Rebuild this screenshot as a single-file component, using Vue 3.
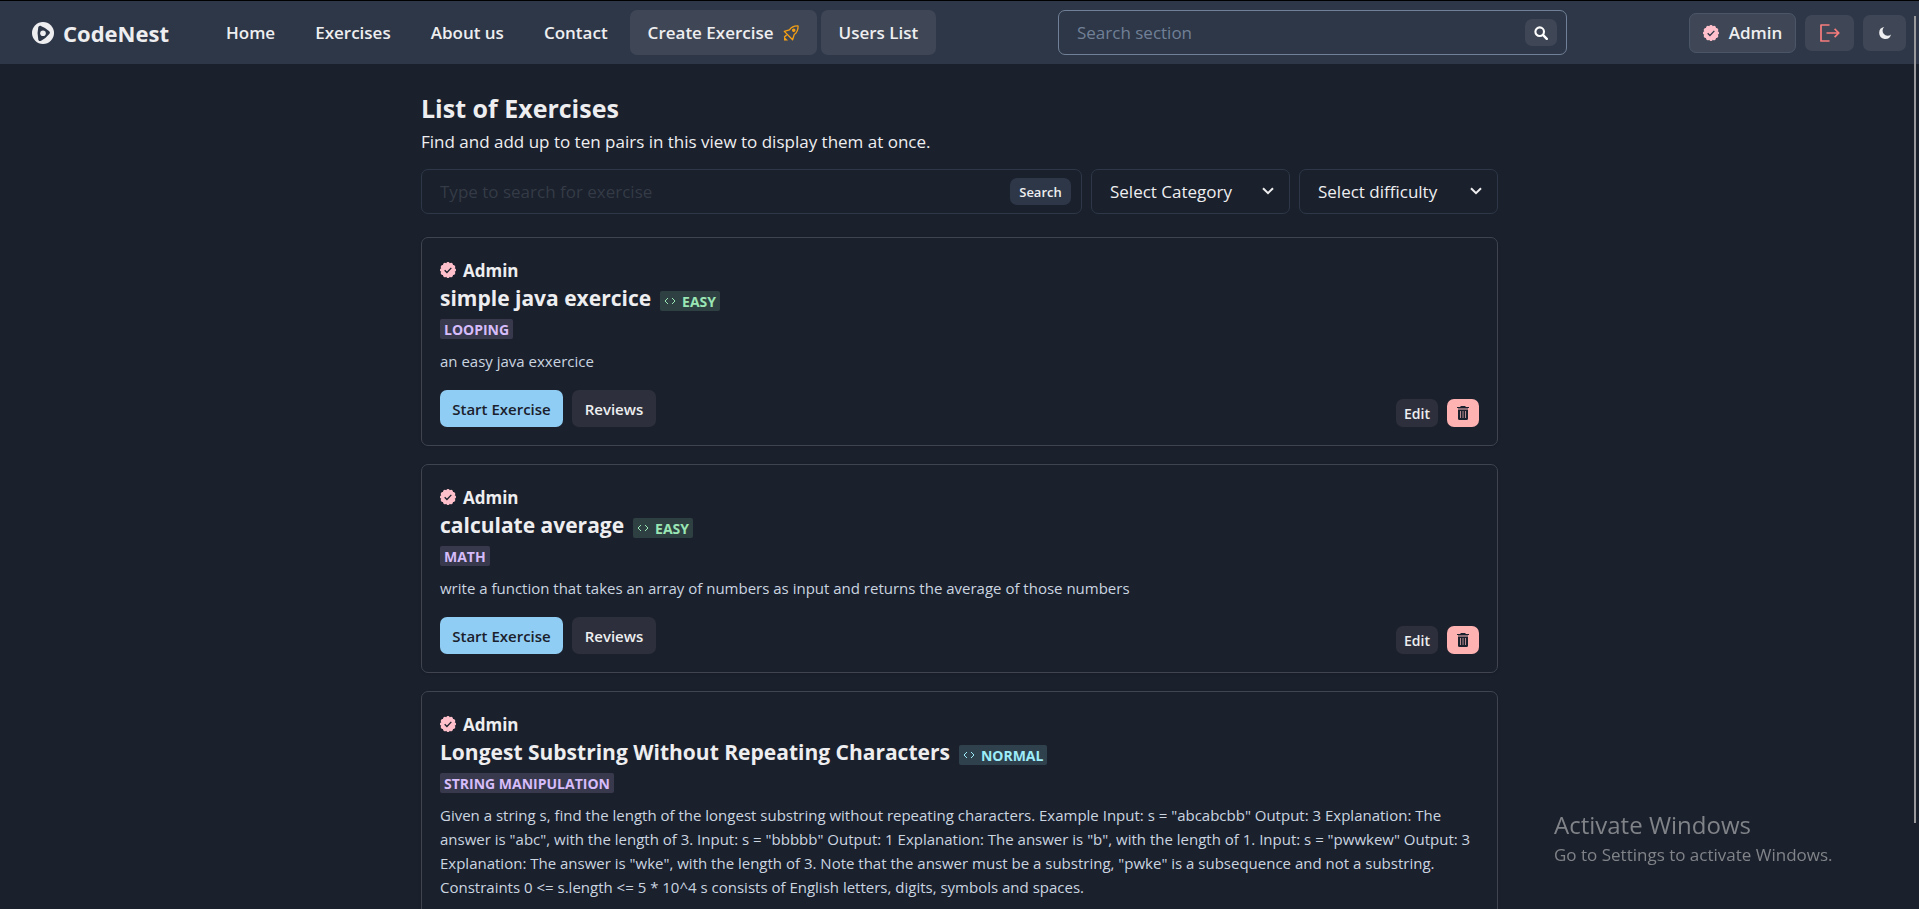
<script setup>
import { ref } from 'vue'

const navLinks = ['Home', 'Exercises', 'About us', 'Contact']
const sectionQuery = ref('')
const exerciseQuery = ref('')
const category = ref('')
const difficulty = ref('')

const exercises = [
  {
    id: 1,
    title: 'simple java exercice',
    level: 'Easy',
    tag: 'Looping',
    text: 'an easy java exxercice',
  },
  {
    id: 2,
    title: 'calculate average',
    level: 'Easy',
    tag: 'Math',
    text: 'write a function that takes an array of numbers as input and returns the average of those numbers',
  },
  {
    id: 3,
    title: 'Longest Substring Without Repeating Characters',
    level: 'Normal',
    tag: 'String manipulation',
    text: 'Given a string s, find the length of the longest substring without repeating characters. Example Input: s = "abcabcbb" Output: 3 Explanation: The answer is "abc", with the length of 3. Input: s = "bbbbb" Output: 1 Explanation: The answer is "b", with the length of 1. Input: s = "pwwkew" Output: 3 Explanation: The answer is "wke", with the length of 3. Note that the answer must be a substring, "pwke" is a subsequence and not a substring. Constraints 0 <= s.length <= 5 * 10^4 s consists of English letters, digits, symbols and spaces.',
  },
]

// Scalloped outline of the verified seal: twelve small arcs around a circle.
const lobes = 12
const points = Array.from({ length: lobes }, (_, i) => {
  const a = ((i + 0.5) / lobes) * Math.PI * 2
  return `${(12 + 10.4 * Math.cos(a)).toFixed(2)} ${(12 + 10.4 * Math.sin(a)).toFixed(2)}`
})
const sealPath =
  `M${points[lobes - 1]}` + points.map((p) => `A2.8 2.8 0 0 1 ${p}`).join('') + 'Z'
</script>

<template>
  <div class="page">
    <header class="navbar">
      <a class="brand" href="#">
        <svg class="brand-icon" viewBox="0 0 22 22" aria-hidden="true">
          <circle cx="11" cy="11" r="11" fill="#eeeef0" />
          <path d="M8.2 5.8Q12.5 7.4 15.9 10.6Q12.8 14.6 8.2 17Q6.8 11.4 8.2 5.8Z" fill="#2d3748" stroke="#2d3748" stroke-width="4" stroke-linejoin="round" />
          <circle cx="11" cy="11.3" r="2.8" fill="#eeeef0" />
        </svg>
        <span>CodeNest</span>
      </a>
      <nav class="links">
        <a v-for="link in navLinks" :key="link" class="link" href="#">{{ link }}</a>
        <a class="link filled" href="#">
          Create Exercise
          <svg class="rocket" viewBox="0 0 16 16" fill="none" stroke="#f6a014" stroke-width="1.3" stroke-linejoin="round" aria-hidden="true">
            <path d="M15 1C11.4.7 8.6 2 6.4 4.8L1.3 6.4 9.6 14.7 11.2 9.6C14 7.4 15.3 4.6 15 1Z" />
            <circle cx="10.7" cy="5.3" r="1.1" fill="#f6a014" />
            <path d="M1 15.500V11.500L5 15.500Z" fill="#f6a014" stroke="none" />
            <path d="M1.200 12.300 3.800 9.700" />
          </svg>
        </a>
        <a class="link filled" href="#">Users List</a>
      </nav>
      <form class="section-search" role="search" @submit.prevent>
        <input v-model="sectionQuery" type="text" placeholder="Search section" aria-label="Search section" />
        <button class="glass" type="submit" aria-label="Search">
          <svg viewBox="0 0 16 16" fill="none" stroke="#fff" aria-hidden="true">
            <circle cx="6.5" cy="6.5" r="4.9" stroke-width="2.4" />
            <path d="M10.2 10.2 14.6 14.6" stroke-width="2.8" stroke-linecap="round" />
          </svg>
        </button>
      </form>
      <div class="account">
        <button class="user" type="button">
          <svg class="seal" viewBox="0 0 24 24" aria-hidden="true">
            <path :d="sealPath" fill="#ffc0cb" />
            <path d="M7 12.4 10.4 15.7 17 8.8" fill="none" stroke="#2d3748" stroke-width="2" />
          </svg>
          Admin
        </button>
        <button class="logout" type="button" aria-label="Log out">
          <svg viewBox="0 0 20 18" fill="none" stroke="#f87e7e" stroke-width="1.7" stroke-linejoin="round" aria-hidden="true">
            <path d="M9.5 1H1V17H9.5M6.500 9H18.800M14.600 4.900 18.800 9 14.600 13.100" />
          </svg>
        </button>
        <button class="theme" type="button" aria-label="Toggle colour mode">
          <svg viewBox="0 0 12 12" aria-hidden="true">
            <path d="M5.2 0A6 6 0 1 0 12 7.4 4.4 4.4 0 0 1 5.2 0Z" fill="#eeeef0" />
          </svg>
        </button>
      </div>
    </header>

    <main class="content">
      <h1>List of Exercises</h1>
      <p class="intro">Find and add up to ten pairs in this view to display them at once.</p>
      <form class="filters" @submit.prevent>
        <div class="finder">
          <input v-model="exerciseQuery" type="text" placeholder="Type to search for exercise" aria-label="Type to search for exercise" />
          <button type="submit">Search</button>
        </div>
        <div class="picker">
          <select v-model="category" aria-label="Category">
            <option value="">Select Category</option>
            <option v-for="e in exercises" :key="e.id">{{ e.tag }}</option>
          </select>
          <svg viewBox="0 0 12 8" aria-hidden="true"><path d="M1 1.2 6 6.2 11 1.2" /></svg>
        </div>
        <div class="picker">
          <select v-model="difficulty" aria-label="Difficulty">
            <option value="">Select difficulty</option>
            <option>Easy</option>
            <option>Normal</option>
          </select>
          <svg viewBox="0 0 12 8" aria-hidden="true"><path d="M1 1.2 6 6.2 11 1.2" /></svg>
        </div>
      </form>

      <article v-for="e in exercises" :key="e.id" class="card">
        <div class="author">
          <svg class="seal" viewBox="0 0 24 24" aria-hidden="true">
            <path :d="sealPath" fill="#ffc0cb" />
            <path d="M7 12.4 10.4 15.7 17 8.8" fill="none" stroke="#1a202c" stroke-width="2" />
          </svg>
          <span>Admin</span>
        </div>
        <div class="heading">
          <h2>{{ e.title }}</h2>
          <span class="badge" :class="e.level.toLowerCase()">
            <svg viewBox="0 0 12 8" aria-hidden="true"><path d="M4 1 1 4 4 7M8 1 11 4 8 7" /></svg>
            {{ e.level }}
          </span>
        </div>
        <span class="badge tag">{{ e.tag }}</span>
        <p class="text">{{ e.text }}</p>
        <div class="actions">
          <button class="start" type="button">Start Exercise</button>
          <button class="reviews" type="button">Reviews</button>
          <button class="edit" type="button">Edit</button>
          <button class="remove" type="button" aria-label="Delete exercise">
            <svg viewBox="0 0 12 14" aria-hidden="true">
              <path d="M3.500 1V0H8.500V1H12V2H0V1Z" fill="#1a202c" />
              <path d="M1 2H11V4H1Z" fill="#8a6b73" />
              <path d="M1 4H11V12.5Q11 14 9.5 14H2.5Q1 14 1 12.5Z" fill="#1a202c" />
              <path d="M3.5 5V12M6 5V12M8.5 5V12" stroke="#b98b8f" stroke-width="1" />
            </svg>
          </button>
        </div>
      </article>
    </main>

    <div class="scroll-thumb"></div>
    <aside class="watermark">
      <p class="watermark-title">Activate Windows</p>
      <p>Go to Settings to activate Windows.</p>
    </aside>
  </div>
</template>

<style>
html {
  scrollbar-width: none;
}

body {
  background: #1a202c;
}
</style>

<style scoped>
* {
  box-sizing: border-box;
}

.page {
  min-height: 100vh;
  background: #1a202c;
  color: #eeeef0;
  font-family: 'Segoe UI', 'Open Sans', 'Noto Sans', sans-serif;
  font-size: 17px;
}

h1, h2, p {
  margin: 0;
}

button, input, select {
  font: inherit;
  color: inherit;
}

button {
  display: flex;
  align-items: center;
  justify-content: center;
  border: 0;
  padding: 0;
  border-radius: 7px;
  background: #3f4756;
  font-weight: 600;
  cursor: pointer;
}

svg {
  display: block;
  flex: none;
}

a {
  color: inherit;
  text-decoration: none;
}

.navbar {
  display: flex;
  align-items: center;
  height: 64px;
  padding: 0 13px 0 32px;
  border-top: 1px solid #000;
  background: #2d3748;
}

.brand {
  display: flex;
  align-items: center;
  gap: 9px;
  width: 176px;
  font-size: 22px;
  font-weight: 700;
}

.brand-icon {
  width: 22px;
  height: 22px;
}

.links {
  display: flex;
  gap: 4px;
}

.link {
  display: flex;
  align-items: center;
  gap: 9px;
  height: 45px;
  padding: 0 18px;
  border-radius: 7px;
  font-weight: 600;
  white-space: nowrap;
}

.filled {
  background: #3f4756;
}

.rocket {
  width: 16px;
  height: 16px;
}

.section-search {
  display: flex;
  align-items: center;
  width: 509px;
  height: 45px;
  margin-left: auto;
  padding: 0 9px 0 18px;
  border: 1px solid #718096;
  border-radius: 7px;
}

.section-search input,
.finder input {
  flex: 1;
  min-width: 0;
  height: 100%;
  padding: 0;
  border: 0;
  outline: 0;
  background: none;
}

.section-search input::placeholder {
  color: #718096;
  opacity: 1;
}

.glass {
  width: 32px;
  height: 27px;
}

.glass svg {
  width: 14px;
  height: 14px;
}

.account {
  display: flex;
  align-items: center;
  gap: 9px;
  margin-left: 122px;
}

.user {
  gap: 10px;
  width: 107px;
  height: 40px;
  border: 1px solid #4a5568;
}

.seal {
  width: 16px;
  height: 16px;
}

.logout {
  width: 49px;
  height: 36px;
}

.logout svg {
  width: 20px;
  height: 18px;
}

.theme {
  width: 43px;
  height: 36px;
}

.theme svg {
  width: 12px;
  height: 12px;
}

.content {
  width: 1077px;
  max-width: 100%;
  margin: 0 auto;
  padding-top: 26px;
}

h1 {
  font-size: 25px;
  line-height: 36px;
}

.intro {
  line-height: 32px;
}

.filters {
  display: grid;
  grid-template-columns: 1fr 199px 199px;
  gap: 9px;
  height: 45px;
  margin: 11px 0 23px;
}

.finder {
  display: flex;
  align-items: center;
  padding: 0 10px 0 18px;
  border: 1px solid #2d3748;
  border-radius: 7px;
}

.finder input::placeholder {
  color: #343b46;
  opacity: 1;
}

.finder button {
  width: 61px;
  height: 27px;
  background: #2d3748;
  font-size: 13px;
}

.picker {
  position: relative;
}

.picker select {
  width: 100%;
  height: 100%;
  padding: 0 18px;
  border: 1px solid #2d3748;
  border-radius: 7px;
  background: #1a202c;
  appearance: none;
}

.picker svg {
  position: absolute;
  top: 18px;
  right: 16px;
  width: 12px;
  height: 8px;
  pointer-events: none;
  fill: none;
  stroke: #eeeef0;
  stroke-width: 2;
}

.card {
  margin-bottom: 18px;
  padding: 18px;
  border: 1px solid #3f444e;
  border-radius: 7px;
  box-shadow: 0 1px 3px rgba(0, 0, 0, 0.1);
}

.author {
  display: flex;
  align-items: center;
  gap: 7px;
  height: 28px;
  font-weight: 700;
}

.heading {
  display: flex;
  align-items: flex-start;
  gap: 9px;
  height: 30px;
}

h2 {
  font-size: 21px;
  line-height: 28px;
}

.badge {
  display: inline-flex;
  align-items: center;
  gap: 6px;
  height: 20px;
  padding: 0 4px;
  border-radius: 2px;
  font-size: 14px;
  font-weight: 700;
  text-transform: uppercase;
}

.badge svg {
  width: 12px;
  height: 8px;
  fill: none;
  stroke: currentColor;
}

.easy {
  background: #2f4042;
  color: #9ae6b4;
}

.normal {
  background: #2f414d;
  color: #9decf9;
}

.heading .badge {
  margin-top: 7px;
}

.tag {
  display: flex;
  width: max-content;
  margin-top: 5px;
  background: #39394d;
  color: #d6bcfa;
}

.text {
  margin: 10px 0 17px;
  color: #cbd5e0;
  font-size: 15px;
  line-height: 24px;
}

.actions {
  display: flex;
  align-items: flex-end;
  gap: 9px;
  font-size: 15px;
}

.start {
  width: 123px;
  height: 37px;
  background: #90cdf4;
  color: #1a202c;
}

.reviews {
  width: 84px;
  height: 37px;
  background: #2d303c;
}

.edit {
  width: 42px;
  height: 28px;
  margin-left: auto;
  background: #2d303c;
  font-size: 14px;
}

.remove {
  width: 32px;
  height: 28px;
  background: #feb2b2;
}

.remove svg {
  width: 12px;
  height: 14px;
}

.scroll-thumb {
  position: fixed;
  top: 16px;
  right: 3px;
  bottom: 86px;
  width: 2px;
  background: #9a9a9d;
}

.watermark {
  position: fixed;
  right: 80px;
  bottom: 41px;
  width: 285px;
  color: #808388;
  line-height: 26px;
  white-space: nowrap;
}

.watermark-title {
  font-size: 24px;
  line-height: 34px;
}
</style>
